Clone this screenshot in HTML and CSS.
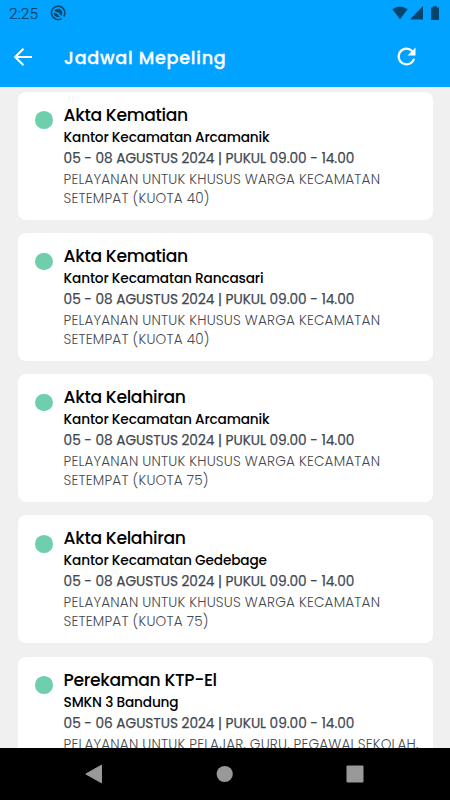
FILE: index.html
```html
<!DOCTYPE html>
<html lang="id">

<head>
  <meta charset="utf-8">
  <meta name="viewport" content="width=device-width, initial-scale=1">
  <title>Jadwal Mepeling</title>
  <link rel="stylesheet" href="styles.css">
</head>

<body>
  <div class="screen">
    <header class="header">
      <div class="status-bar">
        <span class="clock">2:25</span>
        <svg class="status-app" width="16" height="16" viewBox="0 0 16 16" fill="#07456b">
          <path d="M11.500 13.700A6.700 6.700 0 1 1 13.800 11.500" fill="none" stroke="#07456b" stroke-width="1.500"/>
          <path d="M4.300 5.700C6 3.200 9.800 2.900 11.600 5.500C12.900 7.500 12.400 9.600 11.300 11L8.600 7.500L6.200 6.800Z"/>
          <path d="M3.600 7.500L6.600 8.200L9.800 11.800C6.800 13 3.600 11 3.600 7.500Z"/>
        </svg>
        <div class="status-icons">
          <svg width="50" height="16" viewBox="0 0 50 16" fill="#04456d">
            <path d="M0.300 3.200Q8 -2.300 15.700 3.200L8 13.200Z"/>
            <path d="M31 0V13.500H17.800Z"/>
            <path d="M41 0.200h4v1.300h2v12.500h-8V1.500h2Z"/>
          </svg>
        </div>
      </div>
      <div class="toolbar">
        <svg class="back" width="24" height="24" viewBox="0 0 24 24" fill="none" stroke="#fff" stroke-width="2.100">
          <path d="M21 12H4.500M12.500 3.800L4.200 12L12.500 20.200"/>
        </svg>
        <h1>Jadwal Mepeling</h1>
        <svg class="refresh" width="27" height="27" viewBox="0 0 24 24" fill="#fff">
          <path d="M17.65 6.350A7.958 7.958 0 0 0 12 4a8 8 0 1 0 7.730 10h-2.080A6 6 0 1 1 12 6c1.660 0 3.140.69 4.220 1.780L13 11h7V4z"/>
        </svg>
      </div>
    </header>

    <main class="list">
      <div class="card">
        <span class="dot"></span>
        <div class="info">
          <h2>Akta Kematian</h2>
          <h3>Kantor Kecamatan Arcamanik</h3>
          <p class="date">05 - 08 AGUSTUS 2024 | PUKUL 09.00 - 14.00</p>
          <p class="desc">PELAYANAN UNTUK KHUSUS WARGA KECAMATAN<br>SETEMPAT (KUOTA 40)</p>
        </div>
      </div>
      <div class="card">
        <span class="dot"></span>
        <div class="info">
          <h2>Akta Kematian</h2>
          <h3>Kantor Kecamatan Rancasari</h3>
          <p class="date">05 - 08 AGUSTUS 2024 | PUKUL 09.00 - 14.00</p>
          <p class="desc">PELAYANAN UNTUK KHUSUS WARGA KECAMATAN<br>SETEMPAT (KUOTA 40)</p>
        </div>
      </div>
      <div class="card">
        <span class="dot"></span>
        <div class="info">
          <h2>Akta Kelahiran</h2>
          <h3>Kantor Kecamatan Arcamanik</h3>
          <p class="date">05 - 08 AGUSTUS 2024 | PUKUL 09.00 - 14.00</p>
          <p class="desc">PELAYANAN UNTUK KHUSUS WARGA KECAMATAN<br>SETEMPAT (KUOTA 75)</p>
        </div>
      </div>
      <div class="card">
        <span class="dot"></span>
        <div class="info">
          <h2>Akta Kelahiran</h2>
          <h3>Kantor Kecamatan Gedebage</h3>
          <p class="date">05 - 08 AGUSTUS 2024 | PUKUL 09.00 - 14.00</p>
          <p class="desc">PELAYANAN UNTUK KHUSUS WARGA KECAMATAN<br>SETEMPAT (KUOTA 75)</p>
        </div>
      </div>
      <div class="card">
        <span class="dot"></span>
        <div class="info">
          <h2>Perekaman KTP-El</h2>
          <h3>SMKN 3 Bandung</h3>
          <p class="date">05 - 06 AGUSTUS 2024 | PUKUL 09.00 - 14.00</p>
          <p class="desc">PELAYANAN UNTUK PELAJAR, GURU, PEGAWAI SEKOLAH,</p>
        </div>
      </div>
    </main>

    <nav class="nav-bar">
      <svg width="18" height="20" viewBox="0 0 18 20"><path d="M16.500 1.200V18.800L0.800 10Z" fill="#999" stroke="#999" stroke-linejoin="round"/></svg>
      <svg width="18" height="18" viewBox="0 0 18 18"><circle cx="9.700" cy="9" r="8.100" fill="#999"/></svg>
      <svg width="18" height="18" viewBox="0 0 18 18"><rect x="0.500" y="0.500" width="17" height="17" rx="1" fill="#999"/></svg>
    </nav>
  </div>
</body>

</html>
```
FILE: styles.css
```css
* {
  box-sizing: border-box;
}

body {
  margin: 0;
  font-family: Poppins, Inter, sans-serif;
  background: #f0f0f0;
}

h1, h2, h3, p {
  margin: 0;
  white-space: nowrap;
}

.screen {
  display: flex;
  flex-direction: column;
  height: 800px;
  width: 450px;
  overflow: hidden;
}

/* header */
.header {
  flex: none;
  height: 87px;
  background: #00a3ff;
}

.status-bar {
  display: flex;
  align-items: center;
  height: 27px;
  padding: 0 8px 0 9px;
}

.clock {
  width: 41px;
  font: 300 15.500px/26px Roboto, sans-serif;
  color: #063a5a;
  -webkit-text-stroke: 0.2px #063a5a;
}

.status-app {
  margin-top: -1px;
}

.status-icons {
  margin-left: auto;
  height: 16px;
  margin-top: -3px;
}

.toolbar {
  display: flex;
  align-items: center;
  height: 60px;
  padding: 0 30.500px 0 11px;
}

h1 {
  margin-left: 29px;
  padding-top: 1px;
  font-size: 17.600px;
  font-weight: 500;
  letter-spacing: 0.750px;
  -webkit-text-stroke: 0.3px #fff;
  color: #fff;
}

.refresh {
  margin: -1px 0 0 auto;
}

/* schedule list */
.list {
  flex: 1;
  min-height: 0;
  overflow: hidden;
  padding: 4.800px 17.500px 0;
}

.card {
  display: flex;
  height: 128px;
  margin-bottom: 13.200px;
  padding: 12px 0 0 17.500px;
  border-radius: 8px;
  background: #fff;
}

.dot {
  flex: none;
  width: 17.600px;
  height: 17.600px;
  margin: 7.600px 11px 0 0;
  border-radius: 50%;
  background: #6fcfac;
}

h2 {
  font-size: 17.200px;
  font-weight: 500;
  line-height: 23px;
  letter-spacing: -0.350px;
  color: #000;
}

h3 {
  font-size: 13.700px;
  font-weight: 500;
  line-height: 21px;
  letter-spacing: -0.170px;
  color: #000;
}

.date {
  font-size: 13.700px;
  font-weight: 400;
  line-height: 21px;
  letter-spacing: -0.030px;
  -webkit-text-stroke: 0.250px #43484f;
  color: #43484f;
}

.desc {
  font-size: 13.600px;
  font-weight: 300;
  line-height: 19px;
  letter-spacing: 0.190px;
  padding-top: 1px;
  color: #43484f;
}

/* android buttons */
.nav-bar {
  display: flex;
  flex: none;
  align-items: center;
  justify-content: space-between;
  height: 52.500px;
  padding: 0 86.500px 0 84.500px;
  background: #000;
}
```
